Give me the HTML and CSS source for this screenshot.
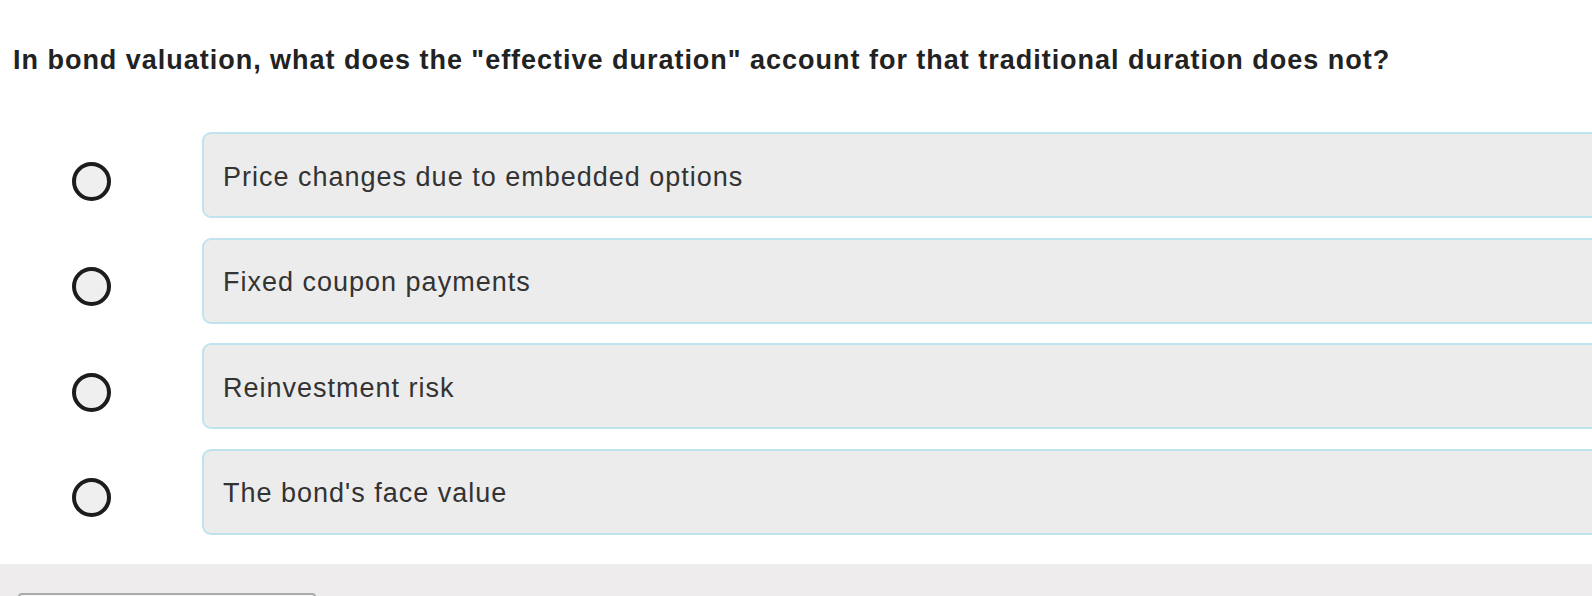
FILE: index.html
```html
<!DOCTYPE html>
<html>
<head>
  <meta name="viewport" content="width=device-width, initial-scale=1.0">
  <title>Quiz</title>
  <link rel="stylesheet" href="styles.css">
</head>
<body>
  <div class="question">
    <h2>In bond valuation, what does the "effective duration" account for that traditional duration does not?</h2>
    <div class="options">
      <label class="option">
        <span class="radio"></span>
        <span class="answer">Price changes due to embedded options</span>
      </label>
      <label class="option">
        <span class="radio"></span>
        <span class="answer">Fixed coupon payments</span>
      </label>
      <label class="option">
        <span class="radio"></span>
        <span class="answer">Reinvestment risk</span>
      </label>
      <label class="option">
        <span class="radio"></span>
        <span class="answer">The bond's face value</span>
      </label>
    </div>
  </div>
  <div class="footer">
    <button class="next"></button>
  </div>
</body>
</html>
```

FILE: styles.css
```css
body {
  margin: 0;
  padding: 0;
  font-family: "Liberation Sans", Arial, sans-serif;
  background: #ffffff;
  overflow: hidden;
}

.question {
  padding: 44px 0 0 13px;
  height: 564px;
  box-sizing: border-box;
}

h2 {
  margin: 0;
  font-size: 27px;
  font-weight: bold;
  letter-spacing: 0.98px;
  color: #222;
  line-height: 32px;
  white-space: nowrap;
}

.options {
  margin-top: 56px;
  display: flex;
  flex-direction: column;
  gap: 19.5px;
}

.option {
  display: flex;
  align-items: center;
}

.radio {
  width: 31px;
  height: 31px;
  border: 4px solid #1c1c1c;
  border-radius: 50%;
  background: #efefef;
  margin: 12px 91px 0 59px;
  flex-shrink: 0;
}

.answer {
  flex: 1;
  min-width: 1500px;
  height: 86px;
  box-sizing: border-box;
  background: #ececec;
  border: 2px solid #c0e3ef;
  border-radius: 9px;
  padding: 4px 0 0 19px;
  display: flex;
  align-items: center;
  font-size: 27px;
  color: #333;
  letter-spacing: 1px;
}

.footer {
  background: #eeecec;
  height: 100px;
  padding: 29px 0 0 18px;
  box-sizing: border-box;
}

.next {
  width: 298px;
  height: 44px;
  border: 2px solid #aaa;
  border-radius: 4px;
  background: #f6f6f6;
}
```
